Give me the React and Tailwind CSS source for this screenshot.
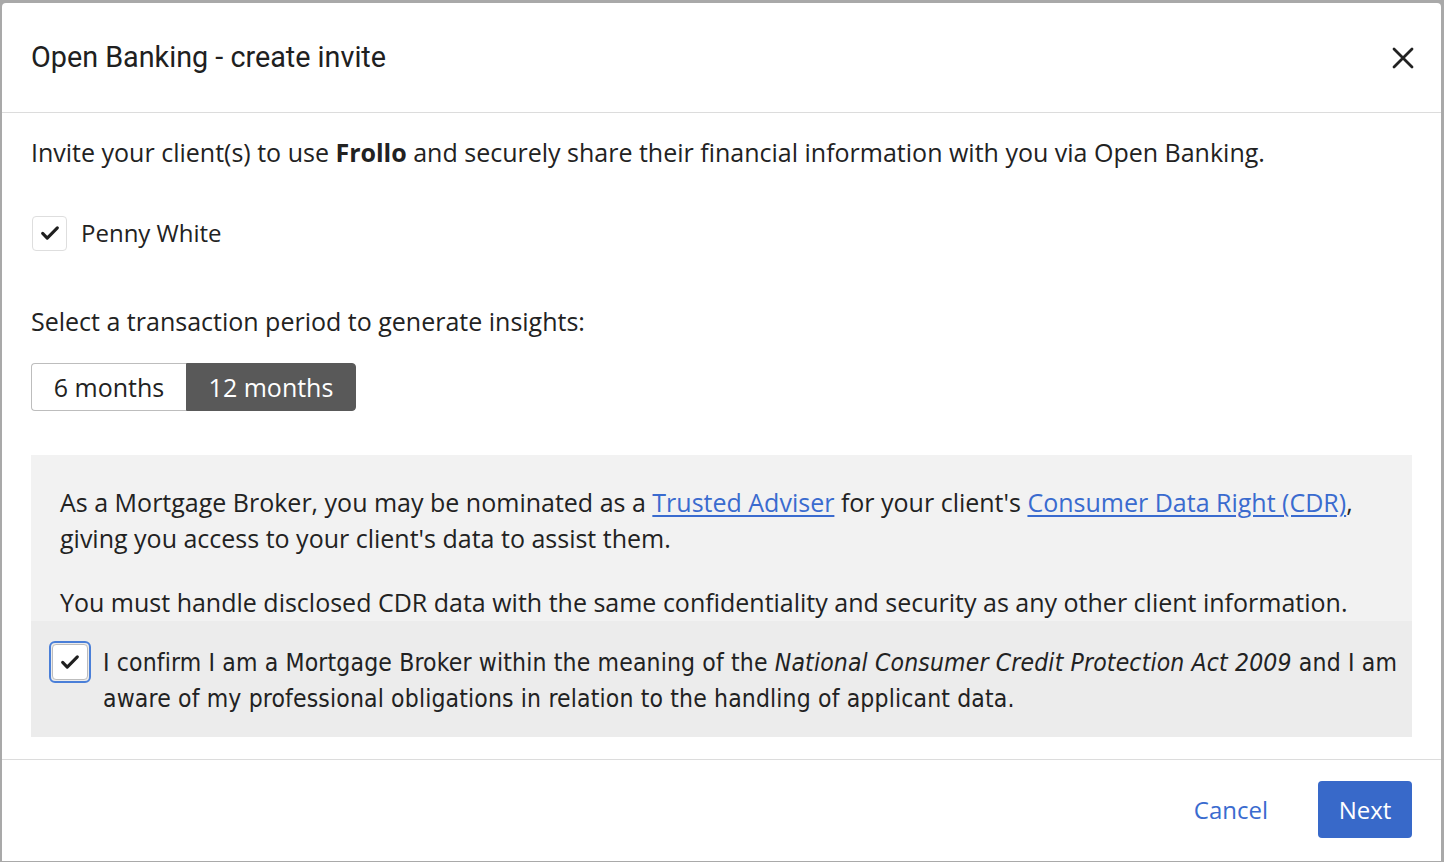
import React, { useState } from 'react';

const openSans = { fontFamily: '"Open Sans", "Liberation Sans", sans-serif' };

function Check({ size = 22 }) {
  return (
    <svg width={size} height={size} viewBox="0 0 24 24" fill="none">
      <path d="M4 12.5l5 5L20 6.5" stroke="#1f1f1f" strokeWidth="3.4" strokeLinecap="round" strokeLinejoin="round" />
    </svg>
  );
}

export default function App() {
  const [period, setPeriod] = useState(12);

  return (
    <div className="w-[1444px] h-[862px] bg-[#a9a9a9] pt-[3px] pl-[2px] pr-[3px] pb-[1px] overflow-hidden" style={openSans}>
      <div className="h-full bg-white rounded-t-[4px] flex flex-col text-[#222]">
        {/* header */}
        <div className="h-[110px] shrink-0 border-b border-[#dcdcdc] flex items-center justify-between pl-[29px] pr-[25px]">
          <h2 className="text-[28.75px] text-[#202020]" style={{ fontFamily: 'Roboto, "Liberation Sans", sans-serif' }}>
            Open Banking - create invite
          </h2>
          <button className="w-[26px] h-[26px] flex items-center justify-center">
            <svg width="22" height="22" viewBox="0 0 22 22">
              <path d="M2 2L20 20M20 2L2 20" stroke="#222" strokeWidth="2.8" strokeLinecap="round" />
            </svg>
          </button>
        </div>

        {/* body */}
        <div className="flex-1 pl-[29px] pr-[29px] pt-[21px] pb-[22px] text-[25px] leading-[36px]">
          <p>
            Invite your client(s) to use <b className="font-bold">Frollo</b> and securely share their financial information with you via Open Banking.
          </p>

          <label className="mt-[45px] flex items-center gap-[14px]">
            <span className="w-[35px] h-[35px] ml-[1px] rounded-[4px] border border-[#dedede] flex items-center justify-center">
              <Check size={22} />
            </span>
            <span className="text-[24px]">Penny White</span>
          </label>

          <p className="mt-[52px]">Select a transaction period to generate insights:</p>

          <div className="mt-[24px] flex h-[48px] w-[325px]">
            <button
              onClick={() => setPeriod(6)}
              className={`w-[155px] rounded-l-[4px] border ${period === 6 ? 'bg-[#595959] text-white border-[#595959]' : 'bg-white border-[#bdbdbd] border-r-0'}`}
            >
              6 months
            </button>
            <button
              onClick={() => setPeriod(12)}
              className={`w-[170px] rounded-r-[4px] border ${period === 12 ? 'bg-[#595959] text-white border-[#595959]' : 'bg-white border-[#bdbdbd] border-l-0'}`}
            >
              12 months
            </button>
          </div>

          <div className="mt-[44px]">
            <div className="bg-[#f2f2f2] pl-[29px] pr-[20px] pt-[29px] pb-[1px]">
              <p>
                As a Mortgage Broker, you may be nominated as a{' '}
                <a className="text-[#3a6bcf] underline underline-offset-[3px]" href="#">Trusted Adviser</a> for your client's{' '}
                <a className="text-[#3a6bcf] underline underline-offset-[3px]" href="#">Consumer Data Right (CDR)</a>, giving you access to your client's data to assist them.
              </p>
              <p className="mt-[28px]">
                You must handle disclosed CDR data with the same confidentiality and security as any other client information.
              </p>
            </div>
            <div className="bg-[#ececec] pl-[18px] pr-[12px] pt-[20px] pb-[20px] flex items-start gap-[12px]">
              <span className="shrink-0 w-[42px] h-[42px] rounded-[6px] border-2 border-[#4a7fd8] p-[1px]">
                <span className="w-full h-full rounded-[4px] border border-[#bdbdbd] bg-white flex items-center justify-center">
                  <Check size={22} />
                </span>
              </span>
              <p className="pt-[4px] text-[24.5px] tracking-[0.15px]" style={{ fontFamily: '"DejaVu Sans Condensed", "DejaVu Sans", sans-serif' }}>
                I confirm I am a Mortgage Broker within the meaning of the <i>National Consumer Credit Protection Act 2009</i> and I am aware of my professional obligations in relation to the handling of applicant data.
              </p>
            </div>
          </div>
        </div>

        {/* footer */}
        <div className="h-[102px] shrink-0 border-t border-[#dcdcdc] flex items-start justify-end gap-[50px] pt-[21px] pr-[29px]">
          <button className="h-[57px] text-[24px] text-[#3a6bcf]">Cancel</button>
          <button className="h-[57px] w-[94px] rounded-[4px] bg-[#3869c9] text-white text-[24px]">Next</button>
        </div>
      </div>
    </div>
  );
}
